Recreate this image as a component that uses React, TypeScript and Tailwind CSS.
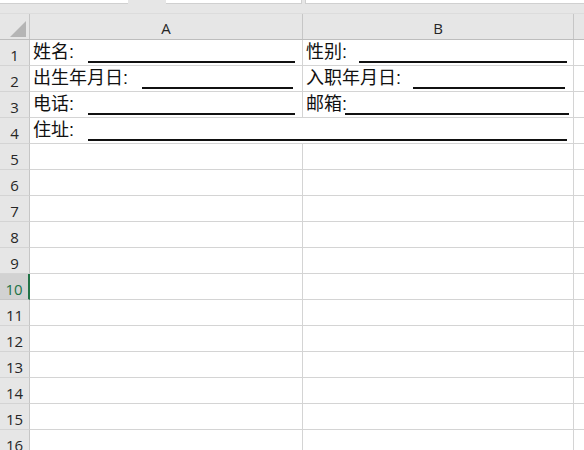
import React from 'react';

type Field = { label: string; lw: string; uw: string };

const formRows: Record<number, Field[]> = {
  1: [
    { label: '姓名:', lw: 'w-[55px]', uw: 'w-[207px]' },
    { label: '性别:', lw: 'w-[53px]', uw: 'w-[208px]' },
  ],
  2: [
    { label: '出生年月日:', lw: 'w-[109px]', uw: 'w-[151px]' },
    { label: '入职年月日:', lw: 'w-[107px]', uw: 'w-[152px]' },
  ],
  3: [
    { label: '电话:', lw: 'w-[55px]', uw: 'w-[207px]' },
    { label: '邮箱:', lw: 'w-[39px]', uw: 'w-[224px]' },
  ],
};

const address: Field = { label: '住址:', lw: 'w-[55px]', uw: 'w-[479px]' };

const rows = Array.from({ length: 16 }, (_, i) => i + 1);

const FieldCell = ({ f }: { f: Field }) => (
  <div className="flex items-start h-full pl-[3px] pt-[3px] text-[18px] leading-[18px] text-[#111] font-['Liberation_Sans','Noto_Sans_CJK_SC',sans-serif] whitespace-nowrap">
    <span className={`${f.lw} shrink-0`}>{f.label}</span>
    <span className={`${f.uw} shrink-0 h-[20px] border-b-2 border-[#111]`}></span>
  </div>
);

export default function App() {
  return (
    <div className="w-[584px] h-[450px] overflow-hidden bg-white font-['Open_Sans',sans-serif] select-none">
      {/* formula bar edge */}
      <div className="flex h-[4px] bg-[#e6e6e6]">
        <div className="w-[128px] bg-white border-b border-[#d0d0d0]"></div>
        <div className="w-[38px]"></div>
        <div className="w-[136px] bg-white border-b border-r border-[#d0d0d0]"></div>
        <div className="w-[3px]"></div>
        <div className="flex-1 bg-white border-b border-l border-[#d0d0d0]"></div>
      </div>
      <div className="h-[10px] bg-[#e6e6e6] border-b border-[#dcdcdc]"></div>

      {/* column headers */}
      <div className="flex h-[26px] bg-[#e6e6e6] border-b border-[#bdbdbd] text-[15px] text-[#262626]">
        <div className="w-[30px] shrink-0 border-r border-[#c6c6c6] flex items-end justify-end pr-[3px] pb-[2px]">
          <svg width="16" height="16" viewBox="0 0 16 16">
            <polygon points="16,0 16,16 0,16" fill="#b5b5b5" />
          </svg>
        </div>
        <div className="w-[273px] shrink-0 border-r border-[#c6c6c6] flex items-center justify-center pt-[4px]">A</div>
        <div className="w-[271px] shrink-0 border-r border-[#c6c6c6] flex items-center justify-center pt-[4px]">B</div>
        <div className="flex-1"></div>
      </div>

      {/* grid */}
      {rows.map((r) => {
        const selected = r === 10;
        return (
          <div key={r} className="flex h-[26px]">
            <div
              className={`w-[30px] shrink-0 flex items-center justify-center pt-[5px] text-[15px] border-b ${
                selected
                  ? 'bg-[#d2d2d2] text-[#217346] border-r-2 border-r-[#217346] border-b-[#c6c6c6]'
                  : 'bg-[#e6e6e6] text-[#262626] border-r border-r-[#c6c6c6] border-b-[#d4d4d4]'
              }`}
            >
              {r}
            </div>
            {r === 4 ? (
              <div className="w-[544px] shrink-0 border-r border-b border-[#d4d4d4]">
                <FieldCell f={address} />
              </div>
            ) : (
              <>
                <div className="w-[273px] shrink-0 border-r border-b border-[#d4d4d4]">
                  {formRows[r] && <FieldCell f={formRows[r][0]} />}
                </div>
                <div className="w-[271px] shrink-0 border-r border-b border-[#d4d4d4]">
                  {formRows[r] && <FieldCell f={formRows[r][1]} />}
                </div>
              </>
            )}
            <div className="flex-1 border-b border-[#d4d4d4]"></div>
          </div>
        );
      })}
    </div>
  );
}
